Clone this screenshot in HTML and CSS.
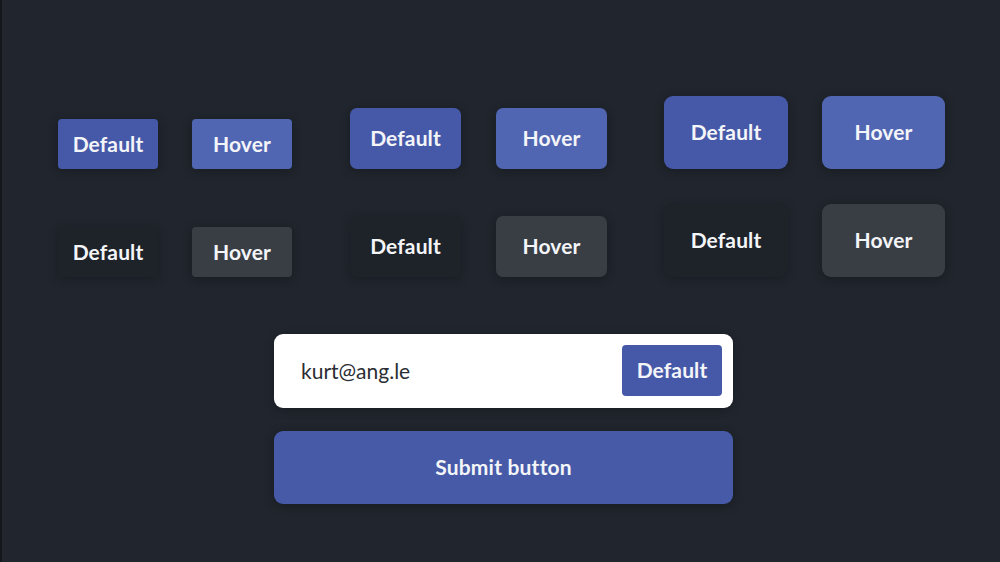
FILE: index.html
```html
<!DOCTYPE html>
<html>
<head>
<meta charset="utf-8">
<link rel="stylesheet" href="styles.css">
</head>
<body>
<div class="frame">
  <div class="grid">
    <div class="row">
      <div class="group">
        <div class="btn sm blue">Default</div>
        <div class="btn sm blue-h">Hover</div>
      </div>
      <div class="group">
        <div class="btn md blue">Default</div>
        <div class="btn md blue-h">Hover</div>
      </div>
      <div class="group large">
        <div class="btn lg blue">Default</div>
        <div class="btn lg blue-h">Hover</div>
      </div>
    </div>
    <div class="row">
      <div class="group">
        <div class="btn sm dark">Default</div>
        <div class="btn sm dark-h">Hover</div>
      </div>
      <div class="group">
        <div class="btn md dark">Default</div>
        <div class="btn md dark-h">Hover</div>
      </div>
      <div class="group large">
        <div class="btn lg dark">Default</div>
        <div class="btn lg dark-h">Hover</div>
      </div>
    </div>
  </div>
  <div class="form">
    <div class="field">
      <span class="value">kurt@ang.le</span>
      <div class="btn sm blue inner">Default</div>
    </div>
    <div class="submit">Submit button</div>
  </div>
</div>
</body>
</html>
```
FILE: styles.css
```css
html, body {
  margin: 0;
  padding: 0;
  background: #21262e;
}
.frame {
  width: 1000px;
  height: 562px;
  box-sizing: border-box;
  border-left: 2px solid #14171b;
  background: #21262e;
  font-family: Lato, "Noto Sans", sans-serif;
  padding-top: 96px;
  padding-left: 56px;
  overflow: hidden;
}
.grid {
  display: flex;
  flex-direction: column;
  gap: 35px;
}
.row {
  display: flex;
  align-items: flex-end;
  gap: 58px;
  height: 73px;
}
.group {
  display: flex;
  align-items: flex-end;
  gap: 34px;
}
.group.large {
  margin-left: -1px;
}
.btn {
  display: flex;
  align-items: center;
  justify-content: center;
  color: #f4f5f8;
  font-weight: 700;
  font-size: 21px;
  letter-spacing: 0.1px;
  box-sizing: border-box;
  padding-bottom: 2px;
}
.sm { width: 100px; height: 50px; border-radius: 4px; }
.md { width: 111px; height: 61px; border-radius: 7px; }
.lg { width: 124px; height: 73px; border-radius: 9px; }
.lg + .lg { width: 123px; }
.md + .md { margin-left: 1px; }
.blue {
  background: #4659a8;
  box-shadow: 0 2px 10px rgba(10, 12, 16, 0.45);
}
.blue-h {
  background: #5166b3;
  box-shadow: 0 2px 10px rgba(10, 12, 16, 0.45);
}
.dark {
  background: #1e2229;
  box-shadow: 0 2px 10px rgba(10, 12, 16, 0.35);
}
.dark-h {
  background: #393e45;
  box-shadow: 0 2px 10px rgba(10, 12, 16, 0.45);
}
.form {
  margin-top: 57px;
  margin-left: 216px;
  width: 459px;
  display: flex;
  flex-direction: column;
  gap: 23px;
}
.field {
  height: 74px;
  background: #ffffff;
  border-radius: 9px;
  display: flex;
  align-items: center;
  justify-content: space-between;
  padding: 0 11px 1px 27px;
  box-sizing: border-box;
  box-shadow: 0 2px 8px rgba(10, 12, 16, 0.35);
}
.value {
  font-size: 21px;
  color: #2a2d33;
  font-weight: 400;
}
.inner {
  height: 51px;
  border-radius: 4px;
  box-shadow: none;
  background: #4659a8;
}
.submit {
  height: 73px;
  background: #465aa8;
  border-radius: 9px;
  display: flex;
  align-items: center;
  justify-content: center;
  color: #f4f5f8;
  font-weight: 700;
  font-size: 21px;
  letter-spacing: 0.2px;
  padding-bottom: 2px;
  box-sizing: border-box;
  box-shadow: 0 2px 10px rgba(10, 12, 16, 0.45);
}
```
